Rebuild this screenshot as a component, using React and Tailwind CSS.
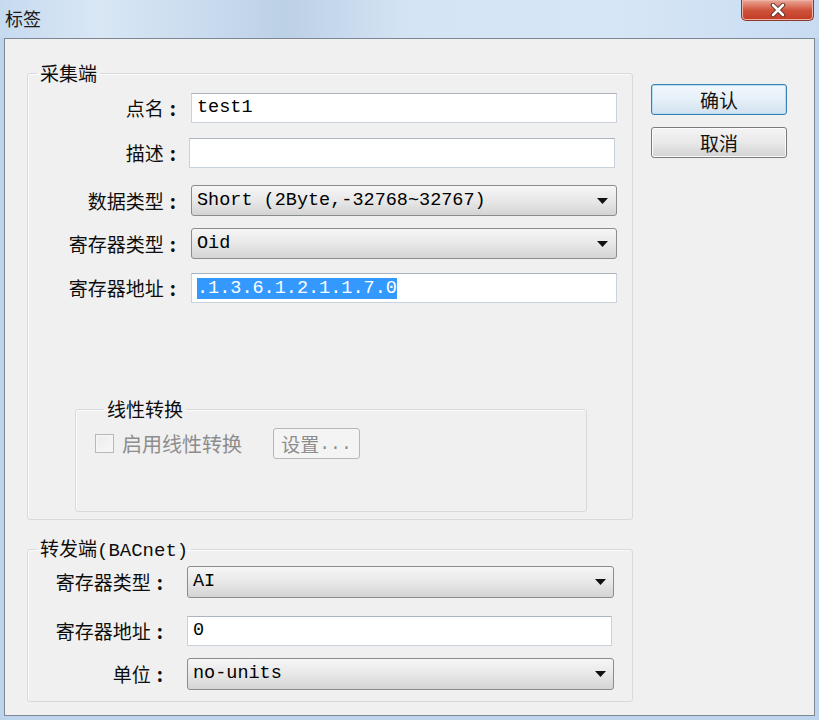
import React from 'react';

const cjk = "font-['Noto_Sans_CJK_SC',sans-serif]";
const mono = "font-['Liberation_Mono','Noto_Sans_CJK_SC',monospace]";

function Label({ text, width }) {
  return (
    <div className={`${width} shrink-0 flex justify-end items-center text-[19px] leading-[24px] text-[#0d0d0d]`}>
      <span>{text}</span>
      <span className="ml-[6px] mr-[4px] font-bold">:</span>
    </div>
  );
}

function TextBox({ width, height, children }) {
  return (
    <div
      className={`${width} ${height} bg-white border border-[#c9d1da] border-t-[#abb4c0] flex items-center pl-[5px] ${mono} text-[18.5px] text-[#000]`}
    >
      {children}
    </div>
  );
}

function ComboBox({ width, height, value, padRight }) {
  return (
    <div
      className={`${width} ${height} ${padRight} flex items-center justify-between rounded-[3px] border border-[#8c8c8c] bg-linear-to-b from-[#f6f6f6] via-[#e8e8e8] to-[#d4d4d4] pl-[5px] ${mono} text-[18.5px] text-[#000]`}
    >
      <span>{value}</span>
      <svg width="11" height="6" viewBox="0 0 11 6">
        <path d="M0 0h11L5.5 6z" fill="#111" />
      </svg>
    </div>
  );
}

function GroupBox({ title, className, children }) {
  return (
    <fieldset className={`border border-[#d6dadd] rounded-[3px] shadow-[inset_1px_1px_0_#fbfbfb] ${className}`}>
      <legend className="ml-[9px] px-[3px] text-[19px] leading-[22px] text-[#0d0d0d]">{title}</legend>
      {children}
    </fieldset>
  );
}

function CloseButton() {
  return (
    <div className="mr-[5px] w-[73px] h-[21px] rounded-b-[5px] border border-t-0 border-[#8b3a2c] bg-linear-to-b from-[#e9a898] via-[#d0533c] to-[#c23a22] shadow-[inset_0_0_0_1px_#eeb3a6] flex items-center justify-center">
      <svg width="16" height="14" viewBox="0 0 16 14">
        <path d="M3 2l10 10M13 2L3 12" stroke="#5a2a22" strokeWidth="4.5" strokeLinecap="round" />
        <path d="M3 2l10 10M13 2L3 12" stroke="#ffffff" strokeWidth="2.6" strokeLinecap="round" />
      </svg>
    </div>
  );
}

export default function App() {
  return (
    <div className={`w-[819px] h-[720px] bg-[#bdd4ec] flex flex-col overflow-hidden ${cjk}`}>
      {/* title bar */}
      <div className="h-[38px] shrink-0 flex items-start justify-between bg-[linear-gradient(90deg,#c6daef_0%,#d9e7f5_12%,#c9dbee_25%,#bcd0e6_35%,#d4e4f4_50%,#d7e6f6_75%,#c8dcf1_100%)]">
        <div className="pl-[5px] mt-[6px] text-[18px] leading-[24px] text-[#1a1a1a]">标签</div>
        <CloseButton />
      </div>

      {/* client area */}
      <div className="mx-[4px] h-[678px] shrink-0 border border-[#7c8793] bg-[#f0f0f0] flex">
        <div className="ml-[22px] mt-[23px] w-[606px] flex flex-col">
          <GroupBox title="采集端" className="w-[606px] pt-[9px] pb-[7px]">
            <div className="flex items-center">
              <Label text="点名" width="w-[152px]" />
              <div className="ml-[11px]">
                <TextBox width="w-[426px]" height="h-[30px]">test1</TextBox>
              </div>
            </div>
            <div className="flex items-center mt-[15px]">
              <Label text="描述" width="w-[152px]" />
              <div className="ml-[9px]">
                <TextBox width="w-[426px]" height="h-[30px]" />
              </div>
            </div>
            <div className="flex items-center mt-[17px]">
              <Label text="数据类型" width="w-[152px]" />
              <div className="ml-[11px]">
                <ComboBox
                  width="w-[426px]"
                  height="h-[31px]"
                  padRight="pr-[8px]"
                  value="Short (2Byte,-32768~32767)"
                />
              </div>
            </div>
            <div className="flex items-center mt-[12px]">
              <Label text="寄存器类型" width="w-[152px]" />
              <div className="ml-[11px]">
                <ComboBox width="w-[426px]" height="h-[31px]" padRight="pr-[8px]" value="Oid" />
              </div>
            </div>
            <div className="flex items-center mt-[14px]">
              <Label text="寄存器地址" width="w-[152px]" />
              <div className="ml-[11px]">
                <TextBox width="w-[426px]" height="h-[30px]">
                  <span className="bg-[#3399ff] text-white leading-[21px]">.1.3.6.1.2.1.1.7.0</span>
                </TextBox>
              </div>
            </div>

            <GroupBox title="线性转换" className="ml-[47px] mt-[95px] w-[512px] pl-[19px] pt-[8px] pb-[52px]">
              <div className="flex items-center h-[31px]">
                <div className="w-[19px] h-[19px] border border-[#b8b8b8] bg-linear-to-br from-[#e9e9e9] to-[#fafafa] shadow-[inset_0_0_0_2px_#f4f4f4]" />
                <span className="ml-[8px] text-[20px] leading-[24px] text-[#8d8d8d]">启用线性转换</span>
                <button
                  className="ml-[31px] w-[87px] h-[31px] rounded-[3px] border border-[#b3b8bc] bg-[#f4f4f4] flex items-center justify-center text-[19px] leading-none text-[#8d8d8d]"
                  disabled
                >
                  <span>设置</span>
                  <span className={`${mono} text-[18px]`}>...</span>
                </button>
              </div>
            </GroupBox>
          </GroupBox>

          <GroupBox
            title={
              <>
                转发端<span className={`${mono} text-[19px]`}>(BACnet)</span>
              </>
            }
            className="mt-[17px] w-[606px] pt-[4px] pb-[11px]"
          >
            <div className="flex items-center">
              <Label text="寄存器类型" width="w-[139px]" />
              <div className="ml-[20px]">
                <ComboBox width="w-[427px]" height="h-[32px]" padRight="pr-[7px]" value="AI" />
              </div>
            </div>
            <div className="flex items-center mt-[18px]">
              <Label text="寄存器地址" width="w-[139px]" />
              <div className="ml-[20px]">
                <TextBox width="w-[425px]" height="h-[30px]">0</TextBox>
              </div>
            </div>
            <div className="flex items-center mt-[12px]">
              <Label text="单位" width="w-[139px]" />
              <div className="ml-[20px]">
                <ComboBox width="w-[427px]" height="h-[32px]" padRight="pr-[7px]" value="no-units" />
              </div>
            </div>
          </GroupBox>
        </div>

        {/* buttons */}
        <div className="ml-[18px] mt-[45px] flex flex-col gap-[12px]">
          <button className="w-[136px] h-[31px] rounded-[3px] border border-[#3c7fb1] bg-linear-to-b from-[#f2f8fc] via-[#e6f0f8] to-[#d2e2ef] shadow-[inset_0_0_0_1px_#b5def5] text-[19px] leading-none text-[#111]">
            确认
          </button>
          <button className="w-[136px] h-[31px] rounded-[3px] border border-[#7a7a7a] bg-linear-to-b from-[#f4f4f4] via-[#e9e9e9] to-[#d3d3d3] shadow-[inset_0_0_0_1px_#fbfbfb] text-[19px] leading-none text-[#111]">
            取消
          </button>
        </div>
      </div>
    </div>
  );
}
